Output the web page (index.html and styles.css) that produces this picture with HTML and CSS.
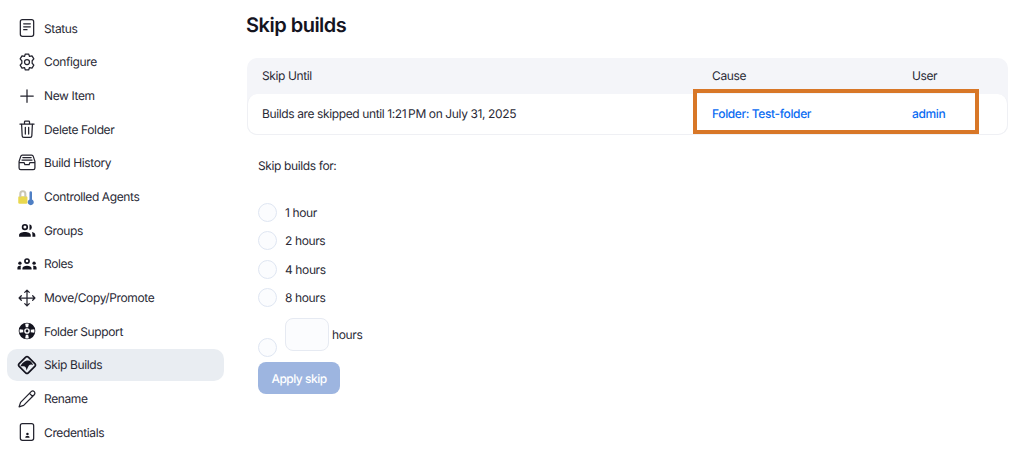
FILE: index.html
```html
<!DOCTYPE html>
<html lang="en">
<head>
<meta charset="utf-8">
<title>Skip builds</title>
<link rel="stylesheet" href="styles.css">
</head>
<body>
<div class="page">
  <nav class="side">
    <a class="item"><svg class="ic" viewBox="0 0 24 24"><rect x="4" y="2" width="16" height="20" rx="2.500"/><path d="M8 7h8M8 10.500h8M8 14h4"/></svg>Status</a>
    <a class="item"><svg class="ic" viewBox="0 0 24 24"><path d="M10 2.500h4l1 2.800 3-.6 2.200 3.500-2 2.300v3l2 2.300-2.200 3.500-3-.6-1 2.800h-4l-1-2.800-3 .6-2.200-3.500 2-2.300v-3l-2-2.300L6 4.700l3 .6z"/><circle cx="12" cy="12" r="3"/></svg>Configure</a>
    <a class="item"><svg class="ic" viewBox="0 0 24 24"><path d="M12 4.500v15M4.500 12h15"/></svg>New Item</a>
    <a class="item"><svg class="ic" viewBox="0 0 24 24"><path d="M3.500 6h17M9 6V3.500a1 1 0 0 1 1-1h4a1 1 0 0 1 1 1V6M5.500 6l.7 14a2 2 0 0 0 2 2h7.600a2 2 0 0 0 2-2l.7-14M10 10v8M14 10v8"/></svg>Delete Folder</a>
    <a class="item"><svg class="ic" viewBox="0 0 24 24"><path d="M2.500 10l2-6a2 2 0 0 1 2-1.500h11a2 2 0 0 1 2 1.500l2 6v8a2 2 0 0 1-2 2h-15a2 2 0 0 1-2-2zM2.500 11.500h6l1 2.500h5l1-2.500h6M6 8.500h12M7 5.500h10"/></svg>Build History</a>
    <a class="item"><svg class="ic" viewBox="0 0 24 24"><rect class="lock" x="1.500" y="11" width="11" height="9" rx="1.500"/><path class="shackle" d="M4 11V8a3 3 0 0 1 6 0v3"/><path class="thermo" d="M15 6.500a1.500 1.500 0 0 1 3 0v8.500a3.600 3.600 0 1 1-3 0z"/></svg>Controlled Agents</a>
    <a class="item"><svg class="ic solid" viewBox="0 0 24 24"><circle cx="9.500" cy="8.500" r="2.800" class="ring"/><path d="M15 5a3.700 3.700 0 0 1 0 7.200zM2.500 20v-2c0-2.200 3.500-3.500 7-3.500s7 1.300 7 3.500v2zM18 14.500c2.500.5 4 1.800 4 3.500v2h-3.500v-2c0-1.400-.2-2.500-.5-3.500z"/></svg>Groups</a>
    <a class="item"><svg class="ic solid" viewBox="0 0 24 24"><circle cx="12" cy="8.500" r="2.500" class="ring"/><circle cx="3.500" cy="11" r="2"/><circle cx="20.500" cy="11" r="2"/><path d="M6.500 18.500v-1.500c0-1.800 2.500-3 5.500-3s5.500 1.200 5.500 3v1.500zM.5 18.500v-2c0-1.300 1.300-2.300 3-2.300h1.300A4 4 0 0 0 4.500 17v1.500zM23.500 18.500v-2c0-1.300-1.300-2.300-3-2.300h-1.300a4 4 0 0 1 .3 2.800v1.500z"/></svg>Roles</a>
    <a class="item"><svg class="ic" viewBox="0 0 24 24"><path d="M12 2.500v19M2.500 12h19M9.300 5.200L12 2.500l2.700 2.700M9.300 18.800L12 21.500l2.700-2.700M5.200 9.300L2.500 12l2.700 2.700M18.800 9.300l2.700 2.700-2.700 2.700"/></svg>Move/Copy/Promote</a>
    <a class="item"><svg class="ic" viewBox="0 0 24 24"><circle class="dark" cx="12" cy="12" r="10"/><circle class="hole" cx="12" cy="12" r="3.400"/><circle class="dark" cx="12" cy="12" r="1.700"/><path class="hole" d="M9.800 3.300a9 9 0 0 1 4.400 0l-.8 4.300a4.600 4.600 0 0 0-2.800 0zM9.800 20.700a9 9 0 0 0 4.400 0l-.8-4.300a4.600 4.600 0 0 1-2.800 0zM3.300 9.800a9 9 0 0 0 0 4.400l4.300-.8a4.600 4.600 0 0 1 0-2.800zM20.700 9.800a9 9 0 0 1 0 4.400l-4.300-.8a4.600 4.600 0 0 0 0-2.800z"/></svg>Folder Support</a>
    <a class="item active"><svg class="ic thick" viewBox="0 0 24 24"><path d="M10.400 2.600a2.300 2.300 0 0 1 3.200 0l7.800 7.800a2.300 2.300 0 0 1 0 3.200l-7.800 7.800a2.300 2.300 0 0 1-3.200 0l-7.800-7.800a2.300 2.300 0 0 1 0-3.200z"/><path class="dark" d="M4 13.500c2-4 5.500-7 9-7s4.800 2 6.500 5.500c-2-1-4-.8-5.200.7-1 1.300-1.500 3.300-2.800 5.800-.4-2.300-.8-4.200-2.300-4.700-1.600-.5-3.200-.3-5.200-.3z"/></svg>Skip Builds</a>
    <a class="item"><svg class="ic" viewBox="0 0 24 24"><path d="M17 3.200a2.600 2.600 0 0 1 3.700 3.700L8 19.700 2.500 21.500l1.800-5.500zM15 5.200l3.800 3.800"/></svg>Rename</a>
    <a class="item"><svg class="ic" viewBox="0 0 24 24"><rect x="4" y="2" width="16" height="20" rx="2.500"/><circle class="fillc" cx="12.500" cy="14.500" r="1.500"/><path class="fillc" d="M10 19v-1c0-.8 1-1.300 2.500-1.300s2.500.5 2.500 1.300v1z"/></svg>Credentials</a>
  </nav>
  <main class="main">
    <h1 class="title">Skip builds</h1>
    <div class="table">
      <div class="row head">
        <span class="c1">Skip Until</span><span class="c2">Cause</span><span class="c3">User</span>
      </div>
      <div class="row body">
        <span class="c1">Builds are skipped until 1:21&#8201;PM on July 31, 2025</span>
        <a class="c2 link">Folder: Test-folder</a><a class="c3 link">admin</a>
      </div>
      <div class="callout"></div>
    </div>
    <form class="form">
      <p class="lead">Skip builds for:</p>
      <div class="opts">
        <label class="opt"><span class="radio"></span>1 hour</label>
        <label class="opt"><span class="radio"></span>2 hours</label>
        <label class="opt"><span class="radio"></span>4 hours</label>
        <label class="opt"><span class="radio"></span>8 hours</label>
        <label class="opt custom"><span class="radio"></span><span class="field"></span><span class="unit">hours</span></label>
      </div>
      <span class="btn">Apply skip</span>
    </form>
  </main>
</div>
</body>
</html>
```

FILE: styles.css
```css
* { box-sizing: border-box; }
html, body { margin: 0; height: 100%; }
body {
  background: #fff;
  color: #14141f;
  font-family: Inter, "Liberation Sans", sans-serif;
  font-size: 12px;
  letter-spacing: -0.38px;
  text-rendering: geometricPrecision;
  overflow: hidden;
}
.page { display: flex; width: 1024px; height: 458px; overflow: hidden; }
.side {
  width: 217px;
  margin-left: 7px;
  padding-top: 12.300px;
  display: flex;
  flex-direction: column;
  gap: 1.660px;
  flex: none;
}
.item {
  height: 32px;
  display: flex;
  align-items: center;
  flex: none;
  gap: 7px;
  padding-left: 10px;
  border-radius: 10px;
  color: #2a2a36;
}
.item.active { background: #e9edf2; }
.ic {
  width: 20px;
  height: 20px;
  flex: none;
  fill: none;
  stroke: #23232e;
  stroke-width: 1.500;
  stroke-linecap: round;
  stroke-linejoin: round;
}
.ic.thick { stroke: #14141f; stroke-width: 2; }
.ic.solid { fill: #14141f; stroke: none; }
.ic .ring { fill: none; stroke: #14141f; stroke-width: 2; }
.ic .dark { fill: #14141f; stroke: none; }
.ic .hole { fill: #fff; stroke: none; }
.ic .fillc { fill: #14141f; stroke: none; }
.ic .lock { fill: #e9d84f; stroke: none; }
.ic .shackle { stroke: #c9c6b4; stroke-width: 2.500; }
.ic .thermo { fill: #4f7fc4; stroke: none; }
.main { flex: 1; min-width: 0; padding-left: 22px; padding-right: 16px; }
.title {
  margin: 13px 0 0;
  font-size: 20px;
  line-height: 24px;
  font-weight: 600;
  letter-spacing: -0.5px;
  color: #14141f;
}
.table {
  position: relative;
  margin: 21px 0 0 1px;
  background: #f4f5f9;
  border-radius: 10px;
  height: 77px;
  display: flex;
  flex-direction: column;
}
.row { display: flex; align-items: center; padding-bottom: 1px; }
.head { height: 36px; flex: none; padding-left: 15px; color: #2a2a36; }
.body {
  flex: 1;
  padding-left: 14px;
  background: #fff;
  border: 1px solid #eff0f4;
  border-top: none;
  border-radius: 10px;
  color: #2a2a36;
}
.c1 { width: 450px; flex: none; }
.c2 { width: 200px; flex: none; }
.c3 { flex: none; }
.link { color: #0b6cf2; font-weight: 500; }
.callout {
  position: absolute;
  left: 446px;
  top: 31px;
  width: 286px;
  height: 45px;
  border: 4px solid #d87727;
}
.form { padding-left: 12px; }
.lead { margin: 23px 0 0; line-height: 16px; color: #2a2a36; }
.opts { margin-top: 24px; display: flex; flex-direction: column; }
.opt {
  display: flex;
  align-items: center;
  height: 28.500px;
  gap: 8px;
  color: #2a2a36;
}
.radio {
  width: 19px;
  height: 19px;
  border-radius: 50%;
  background: #fbfcfe;
  border: 1.500px solid #dfe6f2;
  flex: none;
}
.custom { height: auto; align-items: flex-end; margin-top: 6px; gap: 8px; }
.field {
  width: 44px;
  height: 33px;
  border: 1.500px solid #e6eaf2;
  border-radius: 8px;
  background: #fbfcfe;
  margin-bottom: 6px;
}
.custom .unit { margin-left: -5px; align-self: flex-start; line-height: 33px; }
.btn {
  display: inline-flex;
  align-items: center;
  justify-content: center;
  width: 82px;
  height: 32px;
  margin-top: 5px;
  border-radius: 8px;
  background: #9db5e0;
  color: #fff;
  font-weight: 500;
  letter-spacing: -0.5px;
}
```
